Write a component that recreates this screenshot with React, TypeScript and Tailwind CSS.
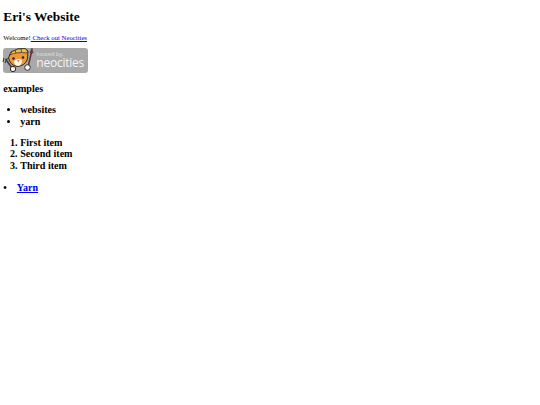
const NeocitiesBadge = () => (
  <div className="relative mt-[6px] h-[25px] w-[85px] rounded-[3px] bg-[#a9a9a9]">
    {/* cat mascot, viewBox matches a 36x30 crop starting 3px left and 2px above the badge */}
    <svg viewBox="0 0 36 30" className="absolute left-[-3px] top-[-2px] h-[30px] w-[36px]">
      {/* brush */}
      <path d="M31.5 6 L28.5 19" stroke="#5d3a32" strokeWidth="1.6" fill="none" />
      <path d="M32 2 L33 7 L30 6.5 Z" fill="#8c2f3a" stroke="#4a2a2a" strokeWidth="0.5" />
      <circle cx="27.5" cy="21.5" r="2.8" fill="#fff" stroke="#2c2c2c" strokeWidth="1" />
      {/* wrench and hand */}
      <path d="M5.5 13 L12 22" stroke="#3f3f3f" strokeWidth="1.6" fill="none" />
      <path d="M4 12 L3 16 M7.5 12 L5 17" stroke="#3f3f3f" strokeWidth="1.1" fill="none" />
      <circle cx="13" cy="23" r="2.7" fill="#f2f2f2" stroke="#2c2c2c" strokeWidth="1" />
      {/* head */}
      <path d="M8.5 12 L11 6 L18 3 L25 2.5 L28 5 L27.5 13 Q25 20 17 20.5 Q10 19 8.5 12 Z" fill="#ee9a3c" stroke="#33241a" strokeWidth="1" />
      {/* helmet */}
      <path d="M9.5 9 Q11 5 18 3 L25 2.5 L27.5 5 L27 7 Q17 5.5 9.5 9 Z" fill="#e9c34f" stroke="#33241a" strokeWidth="0.7" />
      <path d="M15 4 L16 7 M21 3 L21.5 6" stroke="#33241a" strokeWidth="0.7" fill="none" />
      {/* muzzle and face */}
      <path d="M14 15 Q18 11.5 22 14 Q22.5 19.5 17.5 20 Q14 19.5 14 15 Z" fill="#fff3e4" />
      <circle cx="13.5" cy="12.5" r="1.2" fill="#222" />
      <circle cx="23" cy="11.5" r="1.2" fill="#222" />
      <path d="M17 14.5 L19.5 14.3 L18.3 16 Z" fill="#b5472f" />
    </svg>
    <div className="absolute left-[33px] top-[3px] text-[5.6px] leading-[6px] text-[#e0e0e0] font-['Open_Sans',sans-serif]">hosted by,</div>
    <div className="absolute left-[33px] top-[9px] text-[12px] leading-[12px] tracking-[-0.25px] text-[#f4f4f4] font-['Open_Sans',sans-serif]">neocities</div>
  </div>
);

export default function App() {
  return (
    <div className="min-h-[405px] bg-white p-[3.36px] font-['Liberation_Serif',serif] text-black">
      <h1 className="mt-[6px] text-[13.44px] leading-[15px] font-bold">Eri's Website</h1>
      <p className="mt-[10px] text-[6.72px] leading-[8px]">
        Welcome!<a href="#" className="text-[#0000ee] underline"> Check out Neocities</a>
      </p>
      <NeocitiesBadge />
      <h3 className="mt-[10px] text-[10.08px] leading-[12px] font-bold">examples</h3>
      <ul className="mt-[9px] list-disc pl-[16.8px] text-[10.08px] leading-[11.3px] font-bold">
        <li>websites</li>
        <li>yarn</li>
      </ul>
      <ol className="mt-[10px] list-decimal pl-[16.8px] text-[10.08px] leading-[11.3px] font-bold">
        <li>First item</li>
        <li>Second item</li>
        <li>Third item</li>
      </ol>
      <div className="mt-[11px] flex items-center text-[10.08px] leading-[12px] font-bold">
        <span className="w-[13.5px]">•</span>
        <a href="#" className="text-[#0000ee] underline">Yarn</a>
      </div>
    </div>
  );
}
